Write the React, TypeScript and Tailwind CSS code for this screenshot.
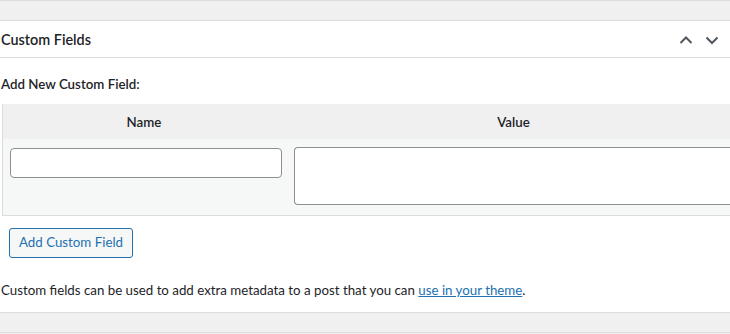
const font = { fontFamily: "Lato, 'Noto Sans', sans-serif" };

function Chevron({ up }: { up?: boolean }) {
  return (
    <svg width="20" height="20" viewBox="0 0 20 20" className="text-[#50575e]">
      <path
        d={up ? "M4.5 13 L10 7.5 L15.5 13" : "M4.5 7.5 L10 13 L15.5 7.5"}
        fill="none"
        stroke="currentColor"
        strokeWidth="2"
      />
    </svg>
  );
}

export default function App() {
  return (
    <div className="w-[730px] h-[334px] overflow-hidden bg-[#f0f0f1] text-[#1d2327]" style={font}>
      <div className="h-[21px] border-t border-b border-[#dcdcde] bg-[#f0f0f1]" />

      <div className="bg-white border-b border-[#dcdcde]">
        <div className="h-[37px] flex items-center justify-between border-b border-[#dcdcde] pr-[8px] pt-[2px]">
          <h2 className="text-[14.4px] font-semibold pl-[1px]">Custom Fields</h2>
          <div className="flex items-center gap-[6px]">
            <Chevron up />
            <Chevron />
          </div>
        </div>

        <div className="pt-[17px] pl-[1px]">
          <p className="text-[13.3px] font-semibold leading-[18px]">Add New Custom Field:</p>
        </div>

        <div className="mt-[11px] ml-[2px] border-l border-b border-[#dcdcde] bg-[#f6f7f7]">
          <div className="flex h-[35px] items-center bg-[#f0f0f1] text-[13.3px] font-semibold pt-[2px]">
            <div className="w-[282px] text-center">Name</div>
            <div className="flex-1 text-center pl-[12px]">Value</div>
          </div>
          <div className="flex items-start pt-[9px] pb-[10px] pl-[7px] gap-[12px]">
            <div className="w-[272px] h-[30px] rounded-[4px] border border-[#8c8f94] bg-white" />
            <div className="flex-1 -mt-[1px] h-[58px] rounded-l-[4px] border border-r-0 border-[#8c8f94] bg-white" />
          </div>
        </div>

        <div className="pt-[12px] pl-[9px]">
          <button className="h-[30px] px-[9px] rounded-[3px] border border-[#2271b1] bg-[#f6f7f7] text-[#2271b1] text-[13.3px]">
            Add Custom Field
          </button>
        </div>

        <p className="pt-[23px] pb-[12px] pl-[1px] text-[13.3px] leading-[19px]">
          Custom fields can be used to add extra metadata to a post that you can{" "}
          <a className="text-[#2271b1] underline">use in your theme</a>.
        </p>
      </div>

      <div className="h-[20px] border-b border-[#dcdcde]" />
    </div>
  );
}
